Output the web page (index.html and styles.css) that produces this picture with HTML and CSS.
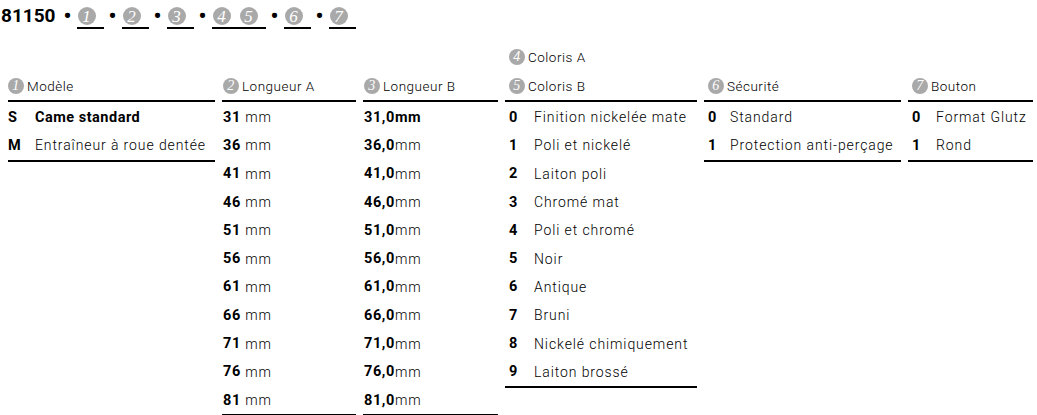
FILE: index.html
```html
<!DOCTYPE html>
<html lang="fr">
<head>
<meta charset="utf-8">
<title>81150</title>
<link rel="stylesheet" href="styles.css">
</head>
<body>
<div class="title">
  <span class="code">81150</span>
  <span class="dot">•</span>
  <span class="slot"><span class="num big">1</span></span>
  <span class="dot">•</span>
  <span class="slot"><span class="num big">2</span></span>
  <span class="dot">•</span>
  <span class="slot"><span class="num big">3</span></span>
  <span class="dot">•</span>
  <span class="slot"><span class="num big">4</span><span class="num big">5</span></span>
  <span class="dot">•</span>
  <span class="slot"><span class="num big">6</span></span>
  <span class="dot">•</span>
  <span class="slot"><span class="num big">7</span></span>
</div>

<div class="groups">
  <div class="group g-model">
    <div class="head"><div class="hl"><span class="num">1</span>Modèle</div></div>
    <div class="body">
      <div class="row"><span class="key">S</span><span class="val strong">Came standard</span></div>
      <div class="row"><span class="key">M</span><span class="val">Entraîneur à roue dentée</span></div>
    </div>
  </div>

  <div class="group g-lena">
    <div class="head"><div class="hl"><span class="num">2</span>Longueur A</div></div>
    <div class="body">
      <div class="row"><b>31</b>&nbsp;<span class="unit">mm</span></div>
      <div class="row"><b>36</b>&nbsp;<span class="unit">mm</span></div>
      <div class="row"><b>41</b>&nbsp;<span class="unit">mm</span></div>
      <div class="row"><b>46</b>&nbsp;<span class="unit">mm</span></div>
      <div class="row"><b>51</b>&nbsp;<span class="unit">mm</span></div>
      <div class="row"><b>56</b>&nbsp;<span class="unit">mm</span></div>
      <div class="row"><b>61</b>&nbsp;<span class="unit">mm</span></div>
      <div class="row"><b>66</b>&nbsp;<span class="unit">mm</span></div>
      <div class="row"><b>71</b>&nbsp;<span class="unit">mm</span></div>
      <div class="row"><b>76</b>&nbsp;<span class="unit">mm</span></div>
      <div class="row"><b>81</b>&nbsp;<span class="unit">mm</span></div>
    </div>
  </div>

  <div class="group g-lenb">
    <div class="head"><div class="hl"><span class="num">3</span>Longueur B</div></div>
    <div class="body">
      <div class="row"><b>31,0mm</b></div>
      <div class="row"><b>36,0</b><span class="unit">mm</span></div>
      <div class="row"><b>41,0</b><span class="unit">mm</span></div>
      <div class="row"><b>46,0</b><span class="unit">mm</span></div>
      <div class="row"><b>51,0</b><span class="unit">mm</span></div>
      <div class="row"><b>56,0</b><span class="unit">mm</span></div>
      <div class="row"><b>61,0</b><span class="unit">mm</span></div>
      <div class="row"><b>66,0</b><span class="unit">mm</span></div>
      <div class="row"><b>71,0</b><span class="unit">mm</span></div>
      <div class="row"><b>76,0</b><span class="unit">mm</span></div>
      <div class="row"><b>81,0</b><span class="unit">mm</span></div>
    </div>
  </div>

  <div class="group g-color">
    <div class="head">
      <div class="hl"><span class="num">4</span>Coloris A</div>
      <div class="hl"><span class="num">5</span>Coloris B</div>
    </div>
    <div class="body">
      <div class="row"><span class="key">0</span><span class="val">Finition nickelée mate</span></div>
      <div class="row"><span class="key">1</span><span class="val">Poli et nickelé</span></div>
      <div class="row"><span class="key">2</span><span class="val">Laiton poli</span></div>
      <div class="row"><span class="key">3</span><span class="val">Chromé mat</span></div>
      <div class="row"><span class="key">4</span><span class="val">Poli et chromé</span></div>
      <div class="row"><span class="key">5</span><span class="val">Noir</span></div>
      <div class="row"><span class="key">6</span><span class="val">Antique</span></div>
      <div class="row"><span class="key">7</span><span class="val">Bruni</span></div>
      <div class="row"><span class="key">8</span><span class="val">Nickelé chimiquement</span></div>
      <div class="row"><span class="key">9</span><span class="val">Laiton brossé</span></div>
    </div>
  </div>

  <div class="group g-sec">
    <div class="head"><div class="hl"><span class="num">6</span>Sécurité</div></div>
    <div class="body">
      <div class="row"><span class="key">0</span><span class="val">Standard</span></div>
      <div class="row"><span class="key">1</span><span class="val">Protection anti-perçage</span></div>
    </div>
  </div>

  <div class="group g-btn">
    <div class="head"><div class="hl"><span class="num">7</span>Bouton</div></div>
    <div class="body">
      <div class="row"><span class="key">0</span><span class="val">Format Glutz</span></div>
      <div class="row"><span class="key">1</span><span class="val">Rond</span></div>
    </div>
  </div>
</div>
</body>
</html>
```

FILE: styles.css
```css
* { box-sizing: border-box; }

body {
  margin: 0;
  background: #fff;
  color: #000;
  font-family: Roboto, "Liberation Sans", sans-serif;
  font-size: 14px;
}

.title {
  display: flex;
  align-items: flex-start;
  gap: 6px;
  height: 43px;
  padding: 5px 0 0 1px;
}

.code {
  font-size: 19px;
  font-weight: 700;
  line-height: 22px;
  margin-right: 3px;
}

.dot {
  display: inline-flex;
  justify-content: center;
  width: 6px;
  font-size: 22px;
  font-weight: 700;
  line-height: 22px;
}

.slot {
  display: inline-flex;
  gap: 9px;
  padding: 2px 8px 2px 1px;
  border-bottom: 2px solid #000;
}

.num {
  display: inline-flex;
  align-items: center;
  justify-content: center;
  width: 16px;
  height: 16px;
  border-radius: 50%;
  background: #a9a9a9;
  color: #fff;
  font-family: "Liberation Serif", serif;
  font-style: italic;
  font-size: 14px;
  line-height: 1;
  margin-right: 3px;
  flex: none;
}

.num.big {
  width: 18px;
  height: 18px;
  font-size: 17px;
  margin-right: 0;
}

.groups {
  display: flex;
  align-items: flex-start;
  gap: 7px;
  padding-left: 8px;
}

.group { flex: none; }

.head {
  display: flex;
  flex-direction: column;
  justify-content: flex-end;
  height: 59px;
  border-bottom: 2px solid #000;
}

.hl {
  display: flex;
  align-items: center;
  height: 28.5px;
  font-size: 13.5px;
  font-weight: 300;
  letter-spacing: 0.5px;
}

.body {
  border-bottom: 2px solid #000;
  padding-top: 1px;
}

.row {
  display: flex;
  align-items: center;
  height: 28.3px;
  font-size: 14px;
  font-weight: 300;
  letter-spacing: 0.9px;
}

.row b { font-weight: 700; letter-spacing: 0.6px; font-size: 14.5px; }

.unit { font-weight: 300; }

.key {
  font-weight: 700;
  font-size: 14.5px;
  letter-spacing: 0;
  flex: none;
}

.val.strong { font-weight: 700; letter-spacing: 0.5px; font-size: 14.5px; }

.g-model { width: 207px; }
.g-model .key { width: 27px; }

.g-lena { width: 134px; }
.g-lena .hl, .g-lena .row { padding-left: 1px; }

.g-lenb { width: 135px; }
.g-lenb .hl, .g-lenb .row { padding-left: 1px; }

.g-color { width: 192px; }
.g-color .hl, .g-color .row { padding-left: 4px; }
.g-color .key { width: 25px; }

.g-sec { width: 197px; }
.g-sec .hl, .g-sec .row { padding-left: 4px; }
.g-sec .key { width: 22px; }

.g-btn { width: 125px; }
.g-btn .hl, .g-btn .row { padding-left: 4px; }
.g-btn .key { width: 24px; }
```
